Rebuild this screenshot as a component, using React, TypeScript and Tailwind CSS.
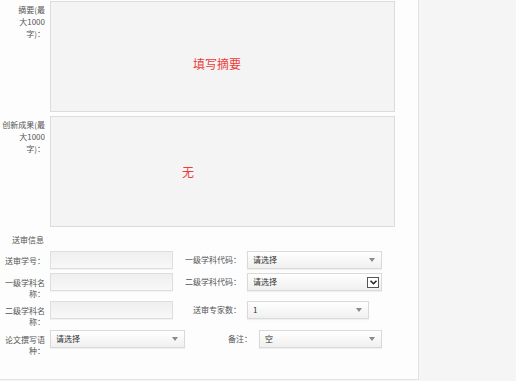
import React from 'react';

const Arrow: React.FC = () => (
  <span className="block w-0 h-0 border-x-[3px] border-x-transparent border-t-[4px] border-t-[#8a8a8a]" />
);

const TextInput: React.FC<{ w: string }> = ({ w }) => (
  <div className={`${w} h-[18px] border border-[#dedede] bg-linear-to-b from-[#efefef] to-[#f8f8f8] shadow-[0_1px_1px_rgba(0,0,0,0.04)]`} />
);

const Select: React.FC<{ w: string; value: string; native?: boolean }> = ({ w, value, native }) => (
  <div
    className={`${w} h-[18px] border border-[#dadada] bg-linear-to-b from-white to-[#f0f0f0] flex items-center justify-between pl-[5px] ${native ? 'pr-[2px]' : 'pr-[6px]'} text-[#333] shadow-[0_1px_1px_rgba(0,0,0,0.05)]`}
  >
    <span>{value}</span>
    {native ? (
      <span className="w-[12px] h-[11px] border border-[#555] bg-white flex items-center justify-center">
        <svg width="9" height="7" viewBox="0 0 9 7">
          <path d="M1.5 1.8 L4.5 4.8 L7.5 1.8" fill="none" stroke="#222" strokeWidth="1.5" />
        </svg>
      </span>
    ) : (
      <Arrow />
    )}
  </div>
);

const Label: React.FC<{ lines: string[] }> = ({ lines }) => (
  <div className="w-[45px] shrink-0 pt-[4px] text-right leading-[11px] text-[#555]">
    {lines.map((l, i) => (
      <div key={i}>{l}</div>
    ))}
  </div>
);

const SideLabel: React.FC<{ w: string; text: string }> = ({ w, text }) => (
  <div className={`${w} h-[18px] shrink-0 flex items-center justify-end text-[#555]`}>{text}</div>
);

export default function App() {
  return (
    <div className="flex w-[516px] h-[381px] bg-[#f5f5f5] text-[8px] font-[Noto_Sans_CJK_SC,sans-serif]">
      <div className="w-[419px] h-[380px] shrink-0 bg-[#fdfdfd] border-r border-b border-[#e2e2e2] pt-[1px]">
        {/* 摘要 */}
        <div className="flex gap-[5px]">
          <div className="w-[45px] shrink-0 pt-[3px] text-right leading-[12px] text-[#555]">
            <div>摘要(最</div>
            <div>大1000</div>
            <div>字)：</div>
          </div>
          <div className="w-[345px] h-[111px] border border-[#dcdcdc] bg-[#f4f4f4] pl-[142px] pt-[55px] text-[12px] leading-[14px] text-[#ec3c3c]">
            填写摘要
          </div>
        </div>

        {/* 创新成果 */}
        <div className="flex gap-[5px] mt-[4px]">
          <div className="w-[45px] shrink-0 pt-[3px] text-right leading-[12px] text-[#555]">
            <div>创新成果(最</div>
            <div>大1000</div>
            <div>字)：</div>
          </div>
          <div className="w-[345px] h-[111px] border border-[#dcdcdc] bg-[#f4f4f4] pl-[131px] flex items-center text-[12px] leading-[14px] text-[#ec3c3c]">
            无
          </div>
        </div>

        <div className="mt-[7px] pl-[12px] leading-[12px] text-[#555]">送审信息</div>

        {/* 表单 */}
        <div className="mt-[5px]">
          <div className="flex items-start h-[22px]">
            <Label lines={['送审学号：']} />
            <div className="ml-[5px]"><TextInput w="w-[123px]" /></div>
            <SideLabel w="w-[68px]" text="一级学科代码：" />
            <div className="ml-[6px]"><Select w="w-[135px]" value="请选择" /></div>
          </div>
          <div className="flex items-start h-[28px]">
            <Label lines={['一级学科名', '称：']} />
            <div className="ml-[5px]"><TextInput w="w-[123px]" /></div>
            <SideLabel w="w-[68px]" text="二级学科代码：" />
            <div className="ml-[6px]"><Select w="w-[135px]" value="请选择" native /></div>
          </div>
          <div className="flex items-start h-[29px]">
            <Label lines={['二级学科名', '称：']} />
            <div className="ml-[5px]"><TextInput w="w-[123px]" /></div>
            <SideLabel w="w-[68px]" text="送审专家数：" />
            <div className="ml-[6px]"><Select w="w-[122px]" value="1" /></div>
          </div>
          <div className="flex items-start h-[26px]">
            <Label lines={['论文撰写语', '种：']} />
            <div className="ml-[5px]"><Select w="w-[135px]" value="请选择" /></div>
            <SideLabel w="w-[67px]" text="备注：" />
            <div className="ml-[7px]"><Select w="w-[123px]" value="空" /></div>
          </div>
        </div>
      </div>
      <div className="flex-1" />
    </div>
  );
}
